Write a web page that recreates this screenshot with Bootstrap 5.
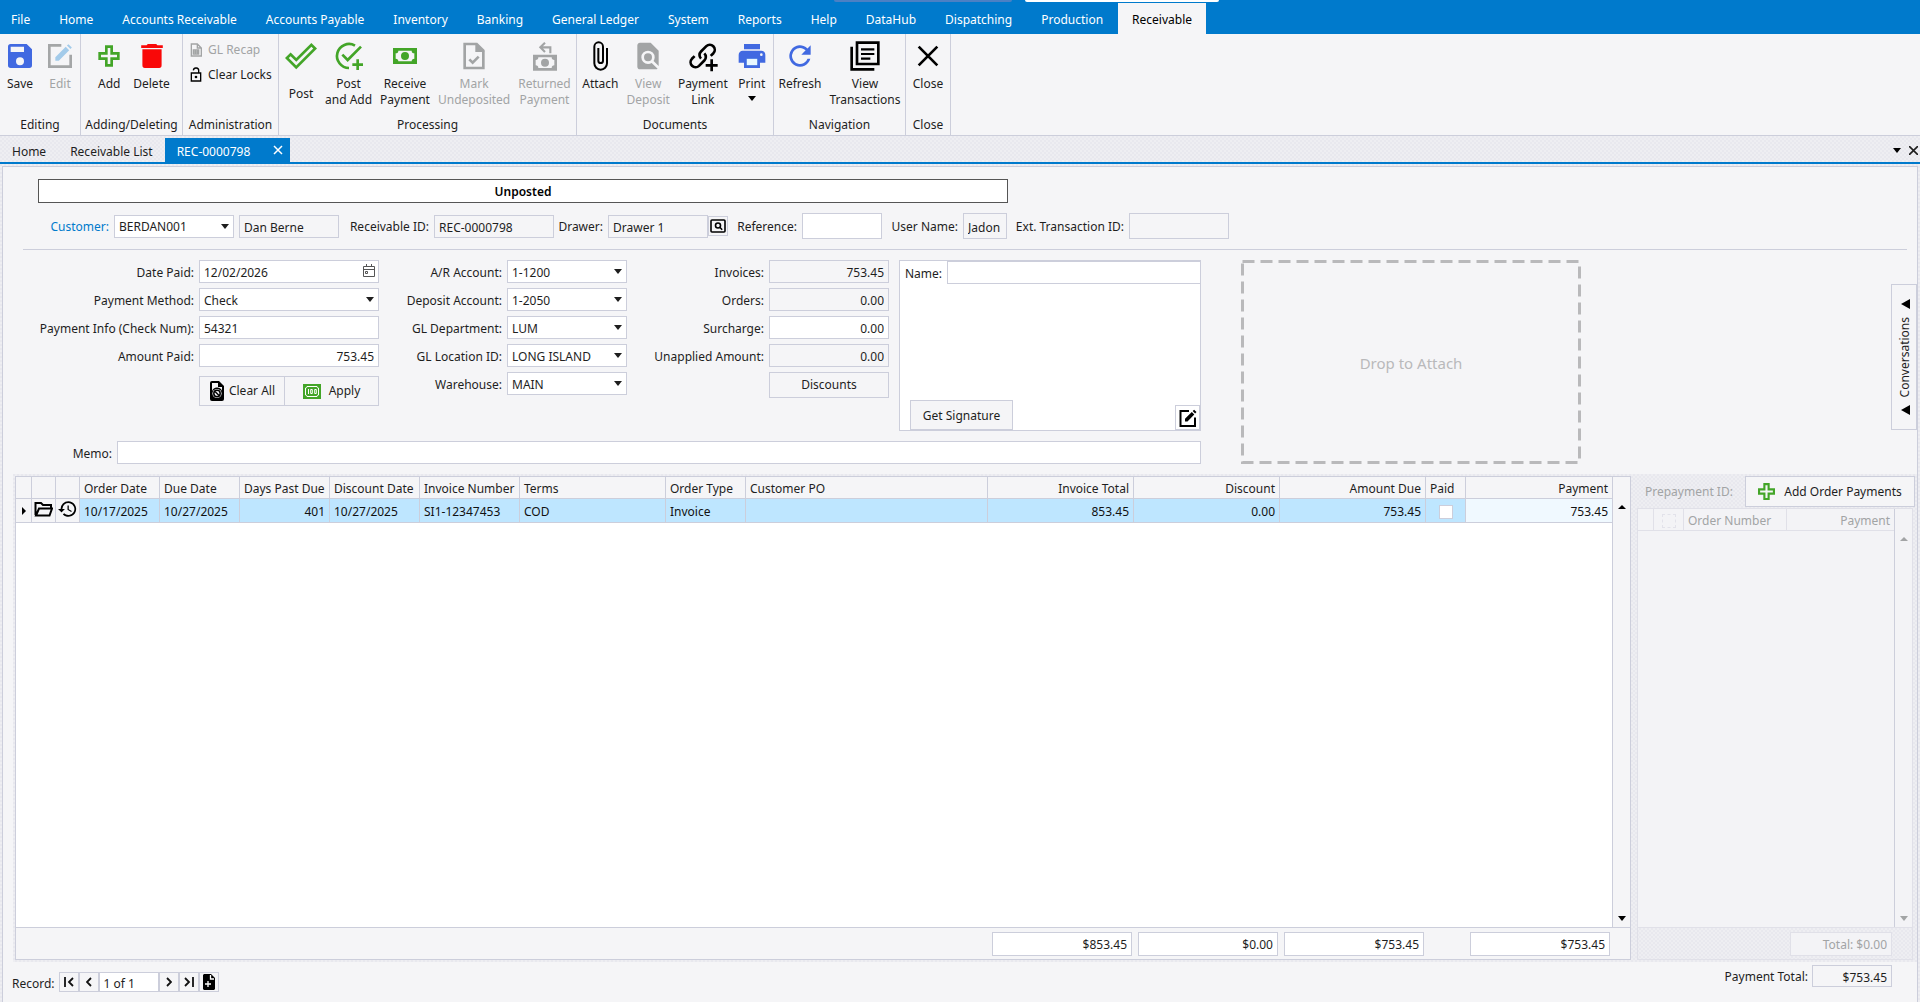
<!DOCTYPE html>
<html lang="en">
<head>
<meta charset="utf-8">
<meta name="viewport" content="width=device-width, initial-scale=1">
<title>REC-0000798 - Receivable</title>
<link href="https://cdn.jsdelivr.net/npm/bootstrap@5.3.0/dist/css/bootstrap.min.css" rel="stylesheet">
<style>
:root{--line:#cccedb;--face:#f5f5f7;--strip:#eeeef2;--blue:#007acc;--ink:#1e1e1e;--dim:#a2a4a5;--green:#43a528;--royal:#4169e1}
body{font-family:"Noto Sans","Open Sans",sans-serif;font-size:12px;line-height:16px;color:var(--ink);background:var(--face)}
button,input,select{font:inherit;color:inherit;border-radius:0}
button{background:none;border:0;padding:0}
svg{display:block;flex:none}
.dots{background-color:var(--strip);background-image:radial-gradient(circle at 1px 1px,#e8e8ee 0 1px,transparent 1px),radial-gradient(circle at 3px 3px,#e8e8ee 0 1px,transparent 1px);background-size:4px 4px}
/* menu */
.menu-bar{background:var(--blue);height:34px;padding-top:3px}
.menu-list{gap:1px}
.menu-bar a{color:#fff;padding:9px 14px 6px;height:31px;text-decoration:none;white-space:nowrap}
.menu-bar a:first-child{padding-left:11px}
.menu-bar a.current{background:var(--face);color:#000}
.edge-bit{top:0;height:2px;border-radius:0 0 4px 4px}
.edge-a{left:834px;width:178px;background:#4b80c4}
.edge-b{left:1025px;width:194px;background:#fff}
/* ribbon */
.ribbon{height:102px;border-bottom:1px solid var(--line)}
.rib-group{border-right:1px solid var(--line);padding-top:6px;padding-bottom:2px}
.rib-group .caption-text{line-height:16px;text-align:center}
.rib-btn{min-width:40px;padding:0 4px;display:flex;flex-direction:column;align-items:center;gap:4px;text-align:center;white-space:nowrap}
.rib-btn.post-btn{gap:14px}
.rib-btn svg{width:32px;height:32px}
.rib-small{display:flex;align-items:center;gap:4px;padding:0 0 0 5px;height:25px}
.rib-stack{margin-top:-3px}
button:disabled{color:var(--dim)}
.w-g1{width:81px}.w-g2{width:102px}.w-g3{width:96px}.w-g4{width:298px}.w-g5{width:197px}.w-g6{width:132px}.w-g7{width:45px}
.rib-pad{padding-left:2px}
/* document tabs */
.doc-tabs{height:28px;border-bottom:2px solid var(--blue);padding-top:2px}
.doc-link{color:var(--ink);text-decoration:none;padding:6px 12px 2px;white-space:nowrap;height:24px}
.doc-link:hover{color:var(--blue)}
.doc-active{background:var(--blue);color:#fff;width:125px;height:24px;padding:0 7px 0 12px}
.doc-active a{color:#fff;text-decoration:none;padding-top:3px}
.doc-tools{padding-right:2px}
/* form */
.page-panel{margin:2px 2px 0;border:1px solid var(--line);border-bottom:0;background:var(--face)}
.fld{height:23px;border:1px solid var(--line);background:#fff;padding:2px 4px 0;min-width:0;outline:0}
.fld[readonly]{background:var(--face)}
.fld:focus{border-color:var(--blue)}
.tall{height:26px}
select.fld{appearance:none;padding-right:16px;background:#fff url("data:image/svg+xml,%3Csvg xmlns='http://www.w3.org/2000/svg' width='8' height='5'%3E%3Cpath d='M0 0h8L4 5z' fill='%231e1e1e'/%3E%3C/svg%3E") no-repeat right 4px center}
.flat-btn{border:1px solid var(--line);background:var(--face)}
.status-box{margin:12px 0 10px 35px;padding-top:1px;width:970px;height:24px;border:1px solid #555;background:#fff;font-weight:600;color:#000}
.head-row{height:26px}
label{padding-top:2px}
.head-row label,.form-row label{text-align:right;white-space:nowrap;flex:none;margin-right:5px}
.l-cust{width:106px;color:#007acc}.l-rec{width:90px}.l-draw{width:49px}.l-ref{width:69px}.l-user{width:76px}.l-ext{width:117px}
.after-gap{margin-left:5px}
.f-100{width:100px}.f-120{width:120px}.f-180{width:180px}.f-80{width:80px}.f-44{width:44px}
.rule-line{height:1px;background:var(--line);margin:10px 10px 10px 20px}
.form-col{display:flex;flex-direction:column;gap:5px}
.form-row{display:flex;align-items:center}
.c1 label{width:191px}.c2 label{width:123px}.c3 label{width:137px}
.pair-row{height:30px}
.clear-btn{flex:0 0 86px}
.sig-box{width:302px;height:171px;border:1px solid var(--line);background:#fff;margin-left:10px}
.sig-box label{margin:0 5px}
.get-sig{width:103px;height:30px;margin-left:10px;padding-top:2px}
.pen-btn{width:25px;height:25px}
.memo-row{margin-top:10px}
.memo-row label{width:109px}
.drop-zone{width:340px;margin-left:40px;padding-top:2px;color:#b9b9bb;font-size:15px}
.drop-zone svg{inset:0}
.conv-tab{right:0;top:117px;width:26px;height:146px;padding-left:2px;border:1px solid var(--line);background:var(--face)}
.conv-tab span{writing-mode:vertical-rl;transform:rotate(180deg)}
/* grids */
.lower{margin:10px 0 0 10px;padding:2px}
.grid-box{border:1px solid var(--line);background:#fff}
.grid-main{border-right:1px solid var(--line)}
.inv-table,.ord-table{table-layout:fixed;width:100%;border-collapse:separate;border-spacing:0;white-space:nowrap}
.inv-table th,.inv-table td{border-right:1px solid var(--line);border-bottom:1px solid var(--line);padding:2px 4px 0;overflow:hidden;font-weight:400}
.inv-table th{background:var(--face);height:22px}
.inv-table td{background:#bee6ff;height:24px;color:#111}
.inv-table th.r,.inv-table td.r{text-align:right}
.inv-table td.icon-cell{background:var(--face);padding:0 2px}
.inv-table td.row-mark{background:var(--face);padding:0 0 0 6px}
.inv-table td.hot{background:#f0f9ff}
.tick{appearance:none;width:14px;height:14px;border:1px solid var(--line);background:#fff;margin:0;display:block}
.tick.faint{background:none;border:1px dashed #e2e2ea}
.scroll-strip{flex:none;width:17px;background:var(--face);padding:28px 0 6px}
.scroll-strip.inner{padding-top:28px}
.k16{width:16px}.k24{width:24px}.k40{width:40px}.k80{width:80px}.k90{width:90px}.k100{width:100px}.k146{width:146px}
.grid-foot{height:32px;border-top:1px solid var(--line);background:var(--face);padding:0 20px 0 0;gap:6px}
.sum{width:140px;height:24px;text-align:right}
.gap-sum{margin-left:40px}
.side{width:278px;margin-left:6px;color:var(--dim)}
.add-pay{width:170px;height:31px;color:var(--ink);gap:9px}
.side-grid{border:1px solid #e0e0e8;margin:1px 2px 0 0}
.ord-table th{height:22px;border-right:1px solid #e0e0e8;border-bottom:1px solid #e0e0e8;font-weight:400;padding:2px 4px 0}
.side-main{background:#f3f3f6}
.side .scroll-strip,.side .grid-foot{background:transparent}
.side .grid-foot,.side .scroll-strip{border-color:#e0e0e8}
.side .sum{width:102px;background:#f3f3f6;border-color:#e0e0e8;color:var(--dim)}
.k30{width:30px}.k103{width:103px}
.foot-bar{height:40px;padding:3px 25px 0 9px}
.nav-btn{width:20px;height:20px;border:1px solid var(--line);display:flex;align-items:center;justify-content:center}
.rec-in{width:60px;height:20px}
.rec-bar{margin-top:7px}
.rec-bar label{padding-top:4px}
.pay-total{height:22px;width:80px;text-align:right}
</style>
<script src="https://cdn.jsdelivr.net/npm/bootstrap@5.3.0/dist/js/bootstrap.bundle.min.js"></script>
</head>
<body class="d-flex flex-column min-vh-100">
<nav class="menu-bar d-flex position-relative">
<span class="edge-bit edge-a position-absolute"></span><span class="edge-bit edge-b position-absolute"></span>
<div class="menu-list d-flex">
<a href="#">File</a><a href="#">Home</a><a href="#">Accounts Receivable</a><a href="#">Accounts Payable</a><a href="#">Inventory</a><a href="#">Banking</a><a href="#">General Ledger</a><a href="#">System</a><a href="#">Reports</a><a href="#">Help</a><a href="#">DataHub</a><a href="#">Dispatching</a><a href="#">Production</a><a href="#" class="current" aria-current="page">Receivable</a>
</div>
</nav>

<div class="ribbon d-flex flex-shrink-0">
<section class="rib-group w-g1 d-flex flex-column justify-content-between"><div class="d-flex">
<button class="rib-btn" type="button"><svg viewBox="0 0 24 24" fill="#4169e1"><path d="M15 9H5V5h10M12 19a3 3 0 1 1 0-6 3 3 0 0 1 0 6M17 3H5a2 2 0 0 0-2 2v14a2 2 0 0 0 2 2h14a2 2 0 0 0 2-2V7l-4-4Z"/></svg>Save</button>
<button class="rib-btn" type="button" disabled><svg viewBox="0 0 24 24" fill="none"><path d="M13 4H4v16h16v-9" stroke="#a4a6a7" stroke-width="2"/><path d="M8.500 15.500v-2.600l7.800-7.800 2.600 2.600-7.800 7.800zM17.200 4.200l1.100-1.100 2.600 2.600-1.100 1.100z" fill="#a3cbea"/></svg>Edit</button>
</div><div class="caption-text">Editing</div></section>

<section class="rib-group w-g2 d-flex flex-column justify-content-between"><div class="d-flex justify-content-center">
<button class="rib-btn" type="button"><svg viewBox="0 0 24 24" fill="#43a528"><path d="M4 9h5V4h6v5h5v6h-5v5H9v-5H4V9m7 4v5h2v-5h5v-2h-5V6h-2v5H6v2h5Z"/></svg>Add</button>
<button class="rib-btn" type="button"><svg viewBox="0 0 24 24" fill="#f90808"><path d="M21 4h-4.500l-1-1h-7l-1 1H3v2h18M4 19a2 2 0 0 0 2 2h12a2 2 0 0 0 2-2V7H4v12Z" transform="matrix(.9 0 0 1 1.200 0)"/></svg>Delete</button>
</div><div class="caption-text">Adding/Deleting</div></section>

<section class="rib-group w-g3 d-flex flex-column justify-content-between"><div class="rib-stack d-flex flex-column align-items-start">
<button class="rib-small" type="button" disabled><svg width="16" height="16" viewBox="0 0 24 24" fill="none" stroke="#a2a4a5" stroke-width="2"><path d="M14 3H5v18h15V9zM14 3v6h6M8 18v-6h8v6zM8 15h8M11 12v6M14 12v6"/></svg>GL Recap</button>
<button class="rib-small" type="button"><svg width="16" height="16" viewBox="0 0 24 24" fill="none" stroke="#000" stroke-width="2"><path d="M5 9h14v12H5zM16 9V6a4 4 0 0 0-8-1"/><circle cx="12" cy="15" r="2" fill="#000" stroke="none"/></svg>Clear Locks</button>
</div><div class="caption-text">Administration</div></section>

<section class="rib-group w-g4 d-flex flex-column justify-content-between"><div class="rib-pad d-flex">
<button class="rib-btn post-btn" type="button"><svg viewBox="0 0 24 24" fill="#43a528"><path d="M19.780 2.200 24 6.440 8.440 22 0 13.550l4.220-4.220 4.220 4.220L19.780 2.200m0 2.800L8.440 16.360l-4.220-4.170-1.410 1.360 5.630 5.620L21.190 6.440 19.780 5Z"/></svg>Post</button>
<button class="rib-btn" type="button"><svg viewBox="0 0 24 24" fill="none" stroke="#43a528" stroke-width="2"><path d="M16.500 4.200A9 9 0 1 0 12 21M7 11l4 4L21 5M18.500 14.500v8M14.500 18.500h8"/></svg><span>Post<br>and Add</span></button>
<button class="rib-btn" type="button"><svg viewBox="0 0 24 24" fill="#43a528"><path d="M3 6h18v12H3V6m9 3a3 3 0 1 1 0 6 3 3 0 0 1 0-6M7 8a2 2 0 0 1-2 2v4a2 2 0 0 1 2 2h10a2 2 0 0 1 2-2v-4a2 2 0 0 1-2-2H7Z"/></svg><span>Receive<br>Payment</span></button>
<button class="rib-btn" type="button" disabled><svg viewBox="0 0 24 24" fill="none" stroke="#a2a4a5" stroke-width="2"><path d="M14 3H5v18h14V8zM8.500 14.500l2.500 2.500 4.500-4.500"/><path d="M13 2v7h7z" fill="#a2a4a5" stroke="none"/></svg><span>Mark<br>Undeposited</span></button>
<button class="rib-btn" type="button" disabled><svg viewBox="0 0 24 24" fill="#a2a4a5"><path fill-rule="evenodd" d="M3 11h18v12H3V11m9 3a3 3 0 1 1 0 6 3 3 0 0 1 0-6M7 13a2 2 0 0 1-2 2v4a2 2 0 0 1 2 2h10a2 2 0 0 1 2-2v-4a2 2 0 0 1-2-2H7Z"/><circle cx="12" cy="17" r="1.500"/><path d="M12 2 8.500 5.500 12 9M8.500 5.500H16V10" fill="none" stroke="#a2a4a5" stroke-width="1.600"/></svg><span>Returned<br>Payment</span></button>
</div><div class="caption-text">Processing</div></section>

<section class="rib-group w-g5 d-flex flex-column justify-content-between"><div class="d-flex justify-content-center">
<button class="rib-btn" type="button"><svg viewBox="0 0 24 24" fill="#000"><path d="M16.500 6v11.500a4 4 0 0 1-8 0V5a2.500 2.500 0 0 1 5 0v10.500a1 1 0 0 1-2 0V6H10v9.500a2.500 2.500 0 0 0 5 0V5a4 4 0 0 0-8 0v12.500a5.500 5.500 0 0 0 11 0V6h-1.500Z"/></svg>Attach</button>
<button class="rib-btn" type="button" disabled><svg viewBox="0 0 24 24" fill="#a2a4a5"><path d="M20 19.590V8l-6-6H6c-1.100 0-2 .9-2 2v16c0 1.100.9 2 2 2h12c.45 0 .85-.15 1.190-.4l-4.430-4.430c-.8.520-1.740.830-2.760.830a5 5 0 1 1 5-5c0 1.020-.31 1.960-.83 2.750L20 19.590zM9 13a3 3 0 1 0 6 0 3 3 0 0 0-6 0z"/></svg><span>View<br>Deposit</span></button>
<button class="rib-btn" type="button"><svg viewBox="0 0 24 24" fill="none" stroke="#000" stroke-width="2"><path d="M10.500 14a3.800 3.800 0 0 1 0-5.400l4-4a3.750 3.750 0 0 1 5.300 5.300l-2 2M13 10a3.800 3.800 0 0 1 0 5.400l-4 4a3.750 3.750 0 0 1-5.300-5.300l2-2"/><path d="M18.500 14.500v9M14 19h9"/></svg><span>Payment<br>Link</span></button>
<button class="rib-btn" type="button"><svg viewBox="0 0 24 24" fill="#4169e1"><path d="M7.500 13.500h9v6h-9z" fill="#e8f7ff" stroke="#87ceeb"/><path d="M19 8H5c-1.660 0-3 1.340-3 3v6h4v4h12v-4h4v-6c0-1.660-1.340-3-3-3zm-3 11H8v-5h8v5zm3-7a1 1 0 1 1 0-2 1 1 0 0 1 0 2zm-1-9H6v4h12V3z"/></svg><span class="d-flex flex-column align-items-center gap-1">Print<svg style="width:8px;height:5px" viewBox="0 0 8 5"><path d="M0 0h8L4 5z"/></svg></span></button>
</div><div class="caption-text">Documents</div></section>

<section class="rib-group w-g6 d-flex flex-column justify-content-between"><div class="d-flex justify-content-center">
<button class="rib-btn" type="button"><svg viewBox="0 0 24 24" fill="#4169e1"><path d="M17.650 6.350A8 8 0 1 0 19.730 14h-2.080A6 6 0 1 1 12 6c1.660 0 3.140.69 4.220 1.780L13 11h7V4l-2.350 2.350z"/></svg>Refresh</button>
<button class="rib-btn" type="button"><svg viewBox="0 0 24 24" fill="none" stroke="#000" stroke-width="2"><path d="M6 2h16v16H6zM2 5v17h17"/><path d="M9 7h10M9 10.500h10M9 14h7" stroke-width="1.600"/></svg><span>View<br>Transactions</span></button>
</div><div class="caption-text">Navigation</div></section>

<section class="rib-group w-g7 d-flex flex-column justify-content-between"><div class="d-flex justify-content-center">
<button class="rib-btn" type="button"><svg viewBox="0 0 24 24" fill="none" stroke="#000" stroke-width="2"><path d="m5 5 14 14M19 5 5 19"/></svg>Close</button>
</div><div class="caption-text">Close</div></section>
</div>

<div class="doc-tabs dots d-flex flex-shrink-0">
<a class="doc-link" href="#">Home</a><a class="doc-link" href="#">Receivable List</a>
<div class="doc-active d-flex align-items-center justify-content-between"><a href="#" aria-current="page">REC-0000798</a><button type="button" aria-label="Close tab"><svg width="10" height="10" viewBox="0 0 10 10" stroke="#fff" stroke-width="1.500"><path d="m1 1 8 8M9 1 1 9"/></svg></button></div>
<div class="doc-tools ms-auto d-flex align-items-center gap-2">
<button type="button" aria-label="Tab list"><svg width="8" height="5" viewBox="0 0 8 5"><path d="M0 0h8L4 5z"/></svg></button>
<button type="button" aria-label="Close"><svg width="9" height="9" viewBox="0 0 9 9" stroke="#1e1e1e" stroke-width="1.600"><path d="m0 0 9 9M9 0 0 9"/></svg></button>
</div>
</div>

<div class="dots d-flex flex-column flex-grow-1">
<main class="page-panel position-relative d-flex flex-column flex-grow-1">
<div class="status-box d-flex align-items-center justify-content-center">Unposted</div>
<div class="head-row d-flex align-items-center">
<label class="l-cust" for="cust">Customer:</label><select class="fld f-120" id="cust"><option>BERDAN001</option></select>
<input class="fld f-100 after-gap" aria-label="Customer name" value="Dan Berne" readonly>
<label class="l-rec" for="rid">Receivable ID:</label><input class="fld f-120" id="rid" value="REC-0000798" readonly>
<label class="l-draw" for="drw">Drawer:</label><input class="fld f-100" id="drw" value="Drawer 1" readonly>
<button class="nav-btn" type="button" aria-label="Find drawer"><svg width="16" height="14" viewBox="0 0 16 14" fill="none" stroke="#000" stroke-width="1.600"><rect x="1" y="1" width="14" height="12" rx="1"/><circle cx="8" cy="6.500" r="2.500"/><path d="m9.800 8.300 2.400 2.400"/></svg></button>
<label class="l-ref" for="ref">Reference:</label><input class="fld tall f-80" id="ref">
<label class="l-user" for="usr">User Name:</label><input class="fld tall f-44" id="usr" value="Jadon" readonly>
<label class="l-ext" for="ext">Ext. Transaction ID:</label><input class="fld tall f-100" id="ext" readonly>
</div>
<div class="rule-line"></div>

<div class="d-flex">
<div>
<div class="d-flex">
<div class="form-col c1">
<div class="form-row"><label for="dp">Date Paid:</label><div class="position-relative"><input class="fld f-180" id="dp" value="12/02/2026"><svg class="position-absolute top-0 end-0 mt-1 me-1" width="12" height="13" viewBox="0 0 12 13" fill="none" stroke="#555"><path d="M.5 2.500h11v10H.5zM.5 5.500h11M3.500 0v3M8.500 0v3M2.500 7.500h2v2h-2z"/></svg></div></div>
<div class="form-row"><label for="pm">Payment Method:</label><select class="fld f-180" id="pm"><option>Check</option></select></div>
<div class="form-row"><label for="pi">Payment Info (Check Num):</label><input class="fld f-180" id="pi" value="54321"></div>
<div class="form-row"><label for="ap">Amount Paid:</label><input class="fld f-180 text-end" id="ap" value="753.45"></div>
<div class="pair-row d-flex f-180 ms-auto mt-1">
<button class="clear-btn flat-btn d-flex align-items-center justify-content-center gap-1" type="button"><svg width="16" height="20" viewBox="0 0 16 20"><path d="M3 0h7l5 5v13a2 2 0 0 1-2 2H3a2 2 0 0 1-2-2V2a2 2 0 0 1 2-2z"/><path d="M3 2h6v4h4v3.500A5.500 5.500 0 0 0 3 10z" fill="#f5f5f7"/><circle cx="8" cy="12.500" r="4.600" fill="#f5f5f7"/><circle cx="8" cy="12.500" r="3.200" fill="none" stroke="#000" stroke-width="1.500"/><path d="m6 10.500 4 4" stroke="#000" stroke-width="1.500"/></svg>Clear All</button>
<button class="flat-btn d-flex align-items-center justify-content-center gap-2 flex-grow-1 border-start-0" type="button"><svg width="18" height="15" viewBox="0 0 18 15" fill="none"><path d="M0 0h18v15H0z" fill="#43a528"/><path d="M4 2.500h10a1.500 1.500 0 0 0 1.500 1.500v7a1.500 1.500 0 0 0-1.500 1.500H4A1.500 1.500 0 0 0 2.500 11V4A1.500 1.500 0 0 0 4 2.500zM5.500 5v5M7.700 5.500h1.600v4H7.700zM11.700 5.500h1.600v4h-1.600z" stroke="#fff"/></svg>Apply</button>
</div>
</div>
<div class="form-col c2">
<div class="form-row"><label for="ar">A/R Account:</label><select class="fld f-120" id="ar"><option>1-1200</option></select></div>
<div class="form-row"><label for="da">Deposit Account:</label><select class="fld f-120" id="da"><option>1-2050</option></select></div>
<div class="form-row"><label for="gd">GL Department:</label><select class="fld f-120" id="gd"><option>LUM</option></select></div>
<div class="form-row"><label for="gl">GL Location ID:</label><select class="fld f-120" id="gl"><option>LONG ISLAND</option></select></div>
<div class="form-row"><label for="wh">Warehouse:</label><select class="fld f-120" id="wh"><option>MAIN</option></select></div>
</div>
<div class="form-col c3">
<div class="form-row"><label for="iv">Invoices:</label><input class="fld f-120 text-end" id="iv" value="753.45" readonly></div>
<div class="form-row"><label for="od">Orders:</label><input class="fld f-120 text-end" id="od" value="0.00" readonly></div>
<div class="form-row"><label for="sc">Surcharge:</label><input class="fld f-120 text-end" id="sc" value="0.00"></div>
<div class="form-row"><label for="ua">Unapplied Amount:</label><input class="fld f-120 text-end" id="ua" value="0.00" readonly></div>
<button class="flat-btn f-120 tall ms-auto" type="button">Discounts</button>
</div>
<div class="sig-box d-flex flex-column justify-content-between">
<div class="d-flex align-items-center"><label for="nm">Name:</label><input class="fld flex-grow-1 border-end-0" id="nm"></div>
<div class="d-flex justify-content-between align-items-end"><button class="get-sig flat-btn" type="button">Get Signature</button>
<button class="pen-btn flat-btn bg-white d-flex align-items-center justify-content-center" type="button" aria-label="Edit signature"><svg width="20" height="20" viewBox="0 0 20 20" fill="none" stroke="#000" stroke-width="2"><path d="M11 3H2.500v15H17V9.500"/><path d="M7 13.500v-2.700l6.800-6.800 2.500 2.500-6.800 6.900zM14.700 3l1.400-1.300 2.400 2.400-1.400 1.400z" fill="#000" stroke="none"/></svg></button></div>
</div>
</div>
<div class="form-row memo-row"><label for="memo">Memo:</label><input class="fld flex-grow-1" id="memo"></div>
</div>
<div class="drop-zone position-relative d-flex align-items-center justify-content-center"><svg class="position-absolute w-100 h-100"><rect x="1.500" y="1.500" width="337" height="201" fill="none" stroke="#b9b9bb" stroke-width="3" stroke-dasharray="12 6"/></svg>Drop to Attach</div>
</div>
<button class="conv-tab position-absolute d-flex flex-column align-items-center justify-content-center gap-2" type="button"><svg width="9" height="10" viewBox="0 0 9 10"><path d="M9 0v10L0 5z"/></svg><span>Conversations</span><svg width="9" height="10" viewBox="0 0 9 10"><path d="M9 0v10L0 5z"/></svg></button>

<div class="lower dots d-flex flex-grow-1">
<div class="grid-box d-flex flex-column flex-grow-1">
<div class="d-flex flex-grow-1">
<div class="grid-main flex-grow-1">
<table class="inv-table">
<colgroup><col class="k16"><col class="k24"><col class="k24"><col class="k80"><col class="k80"><col class="k90"><col class="k90"><col class="k100"><col class="k146"><col class="k80"><col><col class="k146"><col class="k146"><col class="k146"><col class="k40"><col class="k146"></colgroup>
<thead><tr><th></th><th></th><th></th><th>Order Date</th><th>Due Date</th><th>Days Past Due</th><th>Discount Date</th><th>Invoice Number</th><th>Terms</th><th>Order Type</th><th>Customer PO</th><th class="r">Invoice Total</th><th class="r">Discount</th><th class="r">Amount Due</th><th>Paid</th><th class="r border-end-0">Payment</th></tr></thead>
<tbody><tr>
<td class="row-mark"><svg width="4" height="8" viewBox="0 0 4 8"><path d="M0 0v8l4-4z"/></svg></td>
<td class="icon-cell"><button type="button" aria-label="Open invoice"><svg width="19" height="18" viewBox="0 0 19 18" fill="none" stroke="#000" stroke-width="2"><path d="M1.500 15V3H7l2 2h8v3M2 15.500 5 8.500h13l-2.500 7z"/></svg></button></td>
<td class="icon-cell"><button type="button" aria-label="History"><svg width="19" height="18" viewBox="1 2 22 20"><path d="M13 3a9 9 0 0 0-9 9H1l3.900 3.900.1.100L9 12H6a7 7 0 1 1 2.060 4.940l-1.420 1.420A9 9 0 1 0 13 3m-1 5v5l4.280 2.540.72-1.210-3.500-2.080V8H12Z"/></svg></button></td>
<td>10/17/2025</td><td>10/27/2025</td><td class="r">401</td><td>10/27/2025</td><td>SI1-12347453</td><td>COD</td><td>Invoice</td><td></td><td class="r">853.45</td><td class="r">0.00</td><td class="r">753.45</td><td><input class="tick mx-auto" type="checkbox" aria-label="Paid"></td><td class="r hot border-end-0">753.45</td></tr></tbody>
</table>
</div>
<div class="scroll-strip d-flex flex-column align-items-center justify-content-between"><svg width="8" height="4" viewBox="0 0 8 4"><path d="M0 4h8L4 0z"/></svg><svg width="8" height="5" viewBox="0 0 8 5"><path d="M0 0h8L4 5z"/></svg></div>
</div>
<div class="grid-foot d-flex align-items-center justify-content-end">
<input class="fld sum" aria-label="Invoice total sum" value="$853.45"><input class="fld sum" aria-label="Discount sum" value="$0.00"><input class="fld sum" aria-label="Amount due sum" value="$753.45"><input class="fld sum gap-sum" aria-label="Payment sum" value="$753.45">
</div>
</div>
<div class="side d-flex flex-column flex-shrink-0">
<div class="d-flex align-items-center justify-content-between"><span class="ps-2">Prepayment ID:</span>
<button class="flat-btn add-pay d-flex align-items-center justify-content-center" type="button"><svg width="17" height="17" viewBox="4 4 16 16" fill="#43a528"><path d="M4 9h5V4h6v5h5v6h-5v5H9v-5H4V9m7 4v5h2v-5h5v-2h-5V6h-2v5H6v2h5Z"/></svg>Add Order Payments</button></div>
<div class="side-grid d-flex flex-column flex-grow-1">
<div class="side-main d-flex flex-grow-1">
<div class="flex-grow-1 grid-main border-opacity-50"><table class="ord-table"><colgroup><col class="k16"><col class="k30"><col class="k103"><col></colgroup><thead><tr><th></th><th><input class="tick faint mx-auto" type="checkbox" disabled aria-label="Select all"></th><th>Order Number</th><th class="text-end border-end-0">Payment</th></tr></thead></table></div>
<div class="scroll-strip inner d-flex flex-column align-items-center justify-content-between"><svg width="8" height="4" viewBox="0 0 8 4" fill="#a2a4a5"><path d="M0 4h8L4 0z"/></svg><svg width="8" height="5" viewBox="0 0 8 5" fill="#a2a4a5"><path d="M0 0h8L4 5z"/></svg></div>
</div>
<div class="grid-foot d-flex align-items-center justify-content-end"><input class="fld sum" aria-label="Orders total" value="Total: $0.00" disabled></div>
</div>
</div>
</div>

<div class="foot-bar d-flex justify-content-between align-items-start flex-shrink-0">
<div class="rec-bar d-flex align-items-center"><label class="me-1" for="rec">Record:</label>
<button class="nav-btn" type="button" aria-label="First"><svg width="10" height="10" viewBox="0 0 10 10" fill="none" stroke="#111" stroke-width="1.800"><path d="M1 0v10M9 1 5 5l4 4"/></svg></button>
<button class="nav-btn" type="button" aria-label="Previous"><svg width="6" height="10" viewBox="0 0 6 10" fill="none" stroke="#111" stroke-width="1.800"><path d="M5 1 1 5l4 4"/></svg></button>
<input class="fld rec-in" id="rec" value="1 of 1">
<button class="nav-btn" type="button" aria-label="Next"><svg width="6" height="10" viewBox="0 0 6 10" fill="none" stroke="#111" stroke-width="1.800"><path d="m1 1 4 4-4 4"/></svg></button>
<button class="nav-btn" type="button" aria-label="Last"><svg width="10" height="10" viewBox="0 0 10 10" fill="none" stroke="#111" stroke-width="1.800"><path d="M9 0v10M1 1l4 4-4 4"/></svg></button>
<button class="nav-btn" type="button" aria-label="New record"><svg width="12" height="16" viewBox="0 0 12 16"><path d="M1 0h7l4 4v11l-1 1H1l-1-1V1z"/><path d="M7.500 1v4H11M5 7v6M2 10h6" fill="none" stroke="#fff" stroke-width="1.300"/></svg></button>
</div>
<div class="d-flex align-items-center"><label class="me-1" for="pt">Payment Total:</label><input class="fld pay-total" id="pt" value="$753.45" readonly></div>
</div>
</main>
</div>
</body>
</html>
